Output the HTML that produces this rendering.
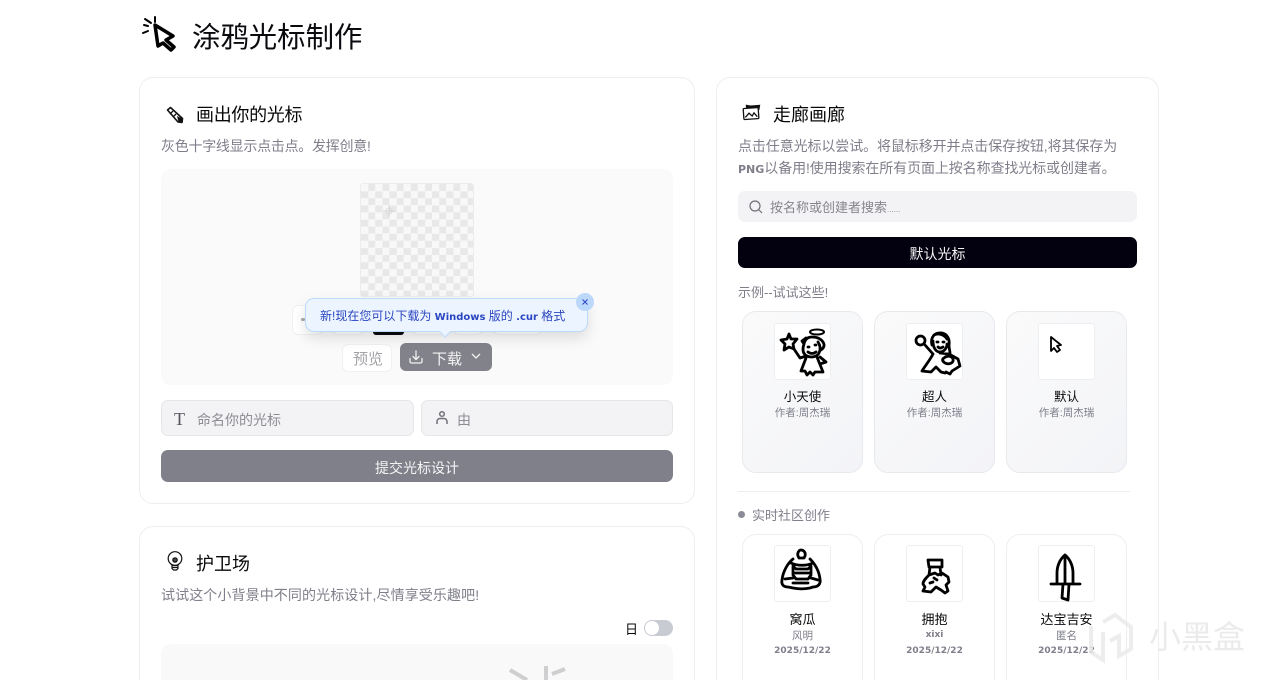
<!DOCTYPE html>
<html lang="zh"><head><meta charset="utf-8"><title>涂鸦光标制作</title>
<style>
*{box-sizing:border-box}
html,body{margin:0;padding:0;background:#fff;width:1280px;height:680px;overflow:hidden}
#p{position:relative;width:1280px;height:680px;overflow:hidden;font-family:"Liberation Sans","Noto Sans CJK SC",sans-serif;color:#09090b}
.a{position:absolute}
.t{position:absolute;white-space:nowrap;line-height:1}
.card{position:absolute;background:#fff;border:1px solid #eeeef0;border-radius:14px}
.card.open{border-bottom:0;border-radius:14px 14px 0 0}
.g{color:#7f7f8b}
.v{font-family:"DejaVu Sans",sans-serif;font-weight:bold}
.tile{position:absolute;width:121px;border-radius:14px}
.thumb{position:absolute;left:31px;top:11px;width:57px;height:57px;background:#fff;border:1px solid #eeeef0;border-radius:3px}
.live .thumb{top:10px}
.thumb svg{position:absolute;left:-1px;top:-1px;overflow:hidden}
.thumb path,.thumb circle,.thumb ellipse{fill:none;stroke:#000;stroke-width:2.800;stroke-linecap:round;stroke-linejoin:round}
.c{position:absolute;left:-1px;width:121px;text-align:center;white-space:nowrap;line-height:1}
.ex{background:linear-gradient(135deg,#fafafb,#f3f4f7);border:1px solid #e8e9ed}
.live{background:#fff;border:1px solid #eeeef0}
.tile.live.open{border-bottom:0;border-radius:14px 14px 0 0}
.mini{position:absolute;height:30px;background:#fff;border:1px solid #f0f0f2;border-radius:6px}
</style></head><body><div id="p">

<svg class="a" style="left:141px;top:14px" width="38" height="40" viewBox="0 0 38 40"><g fill="none" stroke="#000" stroke-linecap="round" stroke-linejoin="round"><path d="M14 3v5M4 5l6 4M2 19l5-2M3 11l4 1" stroke-width="2"/><path d="M14 11l18 11-7 4 8 7-3 3-8-7-5 3z" stroke-width="3.500" fill="#fff"/></g></svg>
<div class="t" style="left:192px;top:24px;font-size:28.400px;color:#0b0b0f">涂鸦光标制作</div>

<!-- left card -->
<div class="card" style="left:139px;top:77px;width:556px;height:427px"></div>
<svg class="a" style="left:165px;top:105px" width="20" height="20" viewBox="0 0 20 20"><path d="M2.500 5L5.500 2.500 17.500 13.500 17 17.500 13 17z" fill="#fff" stroke="#111" stroke-width="1.600" stroke-linejoin="round"/><path d="M8 6l-3 3M11 9l-3 3" stroke="#111" stroke-width="1.300"/><path d="M12 11l5 2.500.5 4-4-.5z" fill="#111"/></svg>
<div class="t" style="left:196px;top:106px;font-size:18px;letter-spacing:-.3px">画出你的光标</div>
<div class="t g" style="left:161px;top:139px;font-size:14px;letter-spacing:-.27px">灰色十字线显示点击点。发挥创意!</div>
<div class="a" style="left:161px;top:169px;width:512px;height:216px;background:#fafafa;border-radius:10px"></div>
<div class="a" style="left:360px;top:183px;width:114px;height:114px;border-radius:3px;border:1px solid #ececec;background-color:#fff;background-image:conic-gradient(#e8e8e8 25%,#f8f8f8 0 50%,#e8e8e8 0 75%,#f8f8f8 0);background-size:14.200px 14.200px"></div>
<svg class="a" style="left:383px;top:205px" width="12" height="12" viewBox="0 0 12 12"><path d="M6 0v12M0 6h12" stroke="#d4d4d4" stroke-width="1"/><circle cx="6" cy="6" r="3" fill="none" stroke="#dcdcdc"/></svg>

<div class="mini" style="left:292px;top:305px;width:31px"></div>
<div class="a" style="left:301px;top:318px;width:4px;height:3px;background:#aaa;border-radius:2px"></div>
<div class="mini" style="left:332px;top:305px;width:32px"></div>
<div class="a" style="left:373px;top:318px;width:31px;height:17px;background:#09090f;border-radius:3px"></div>
<div class="mini" style="left:412px;top:305px;width:32px"></div>
<div class="mini" style="left:453px;top:305px;width:30px"></div>
<div class="mini" style="left:493px;top:305px;width:49px"></div>

<div class="a" style="left:342px;top:344px;width:50px;height:28px;background:#fff;border:1px solid #f1f1f3;border-radius:6px"></div>
<div class="t" style="left:353px;top:352px;font-size:15px;color:#a3a3a8">预览</div>
<div class="a" style="left:400px;top:343px;width:92px;height:28px;background:#82828a;border-radius:6px"></div>
<svg class="a" style="left:409px;top:350px" width="14" height="14" viewBox="0 0 14 14" fill="none" stroke="#f2f2f2" stroke-width="1.300" stroke-linecap="round" stroke-linejoin="round"><path d="M1 8.500v3a1.500 1.500 0 0 0 1.500 1.500h9a1.500 1.500 0 0 0 1.500-1.500v-3M7 1v8M4 6.500L7 9.500l3-3"/></svg>
<div class="t" style="left:432px;top:352px;font-size:15px;color:#f4f4f5">下载</div>
<svg class="a" style="left:471px;top:353px" width="10" height="7" viewBox="0 0 10 7" fill="none" stroke="#f2f2f2" stroke-width="1.300"><path d="M1 1l4 4 4-4"/></svg>

<!-- popup -->
<div class="a" style="left:305px;top:298px;width:283px;height:34px;background:#ecf4ff;border:1px solid #bddafc;border-radius:9px;box-shadow:0 6px 14px rgba(0,0,0,.12)"></div>
<div class="a" style="left:441px;top:328px;width:8px;height:8px;background:#ecf4ff;border-right:1px solid #bddafc;border-bottom:1px solid #bddafc;transform:rotate(45deg)"></div>
<div class="t" style="left:320px;top:310px;font-size:12px;color:#2a46c0">新!现在您可以下载为 <span class="v" style="font-size:10px">Windows</span> 版的 <span class="v" style="font-size:10px">.cur</span> 格式</div>
<div class="a" style="left:576px;top:293px;width:18px;height:18px;border-radius:50%;background:#bcd8fb"></div>
<svg class="a" style="left:582px;top:299px" width="6" height="6" viewBox="0 0 6 6"><path d="M.5.500l5 5M5.500.500l-5 5" stroke="#2a46c0" stroke-width="1"/></svg>

<!-- inputs -->
<div class="a" style="left:161px;top:400px;width:253px;height:36px;background:#f3f3f5;border:1px solid #e6e6e9;border-radius:7px"></div>
<div class="t" style="left:174px;top:410px;font-size:18px;font-family:'Liberation Serif',serif;color:#55555e">T</div>
<div class="t" style="left:197px;top:413px;font-size:14px;color:#8c8c94">命名你的光标</div>
<div class="a" style="left:421px;top:400px;width:252px;height:36px;background:#f3f3f5;border:1px solid #e6e6e9;border-radius:7px"></div>
<svg class="a" style="left:435px;top:410px" width="14" height="16" viewBox="0 0 14 16" fill="none" stroke="#6f6f78" stroke-width="1.500"><circle cx="7" cy="4" r="2.300"/><path d="M2 14v-2.500a3 3 0 0 1 3-3h4a3 3 0 0 1 3 3V14"/></svg>
<div class="t" style="left:457px;top:413px;font-size:14px;color:#8c8c94">由</div>
<div class="a" style="left:161px;top:450px;width:512px;height:32px;background:#80808a;border-radius:7px"></div>
<div class="t" style="left:161px;width:512px;top:461px;font-size:14px;color:#f4f4f5;text-align:center">提交光标设计</div>

<!-- playground -->
<div class="card open" style="left:139px;top:526px;width:556px;height:154px"></div>
<svg class="a" style="left:166px;top:551px" width="18" height="20" viewBox="0 0 18 20" fill="none" stroke="#111" stroke-width="1.200"><circle cx="9" cy="7.500" r="6.800"/><path d="M6 14.500h6v3l-1.500 1.500h-3L6 17.500zM6 16.500h6"/><circle cx="9" cy="9" r="2.200" fill="#444"/></svg>
<div class="t" style="left:196px;top:555px;font-size:18px">护卫场</div>
<div class="t g" style="left:161px;top:588px;font-size:14px;letter-spacing:.1px">试试这个小背景中不同的光标设计,尽情享受乐趣吧!</div>
<div class="t" style="left:625px;top:623px;font-size:13px">日</div>
<div class="a" style="left:644px;top:620px;width:29px;height:16px;background:#c9cbd3;border-radius:8px"></div>
<div class="a" style="left:645px;top:621px;width:14px;height:14px;background:#fff;border-radius:50%"></div>
<div class="a" style="left:161px;top:644px;width:512px;height:36px;background:#f9f9f9;border-radius:10px 10px 0 0"></div>
<svg class="a" style="left:505px;top:660px" width="70" height="20" viewBox="0 0 70 20" fill="none" stroke="#cfcfd1" stroke-width="4"><path d="M5 10l17 10M41 6v14M60 9l-13 5"/></svg>

<!-- right card -->
<div class="card open" style="left:716px;top:77px;width:443px;height:603px"></div>
<svg class="a" style="left:742px;top:104px" width="20" height="18" viewBox="0 0 20 18" fill="none" stroke="#111" stroke-width="1.300"><g transform="rotate(-4 10 9)"><path d="M5 1l4 1h9l-1 4H5z" fill="#111"/><rect x="1.500" y="4" width="15" height="11" rx="1" fill="#fff"/><path d="M3 13l4-4 3 3 2-3 3 4"/></g></svg>
<div class="t" style="left:773px;top:106px;font-size:18px">走廊画廊</div>
<div class="t g" style="left:738px;top:139px;font-size:14px;letter-spacing:-.1px">点击任意光标以尝试。将鼠标移开并点击保存按钮,将其保存为</div>
<div class="t g" style="left:738px;top:161px;font-size:14px;letter-spacing:-.1px"><span class="v" style="font-size:11px;letter-spacing:0">PNG</span>以备用!使用搜索在所有页面上按名称查找光标或创建者。</div>
<div class="a" style="left:738px;top:191px;width:399px;height:31px;background:#f3f3f5;border-radius:7px"></div>
<svg class="a" style="left:749px;top:200px" width="14" height="14" viewBox="0 0 14 14" fill="none" stroke="#6f6f78" stroke-width="1.200"><circle cx="6" cy="6" r="5"/><path d="M10 10l3 3"/></svg>
<div class="t" style="left:770px;top:201px;font-size:13px;color:#85858d">按名称或创建者搜索<span style="font-size:8px">......</span></div>
<div class="a" style="left:738px;top:237px;width:399px;height:31px;background:#03010f;border-radius:7px"></div>
<div class="t" style="left:738px;width:399px;top:247px;font-size:14px;color:#f4f4f5;text-align:center">默认光标</div>
<div class="t g" style="left:738px;top:286px;font-size:13px">示例--试试这些!</div>

<div class="tile ex" style="left:742px;top:311px;height:162px">
 <div class="thumb"><svg width="57" height="57" viewBox="0 0 57 57"><path d="M15 11l2 5 6 0-4 5 1 5-5-2-5 3 1-6-4-4 6-1zM20 26l6 9 6-2M30 21c-2 6-1 10 3 12 4 2 10 1 12-3 2-4 1-8-1-11M30 21c1-5 4-7 8-7 5 0 9 2 11 5 2 3 1 6-2 8M30 21l-2-3 4-3M34 24h1M41 22h1M34 29q4 3 8 0M32 35l-5 13h4l2 4 3-3 3 3 2-3h8l-6-15M46 34l6 5-6 2"/><ellipse cx="43" cy="9" rx="7" ry="2.500" style="stroke-width:2"/></svg></div>
 <div class="c" style="top:79px;font-size:12.500px">小天使</div><div class="c g" style="top:96px;font-size:10.500px">作者:周杰瑞</div>
</div>
<div class="tile ex" style="left:874px;top:311px;height:162px">
 <div class="thumb"><svg width="57" height="57" viewBox="0 0 57 57"><circle cx="14.500" cy="17.500" r="4.500"/><path d="M19 22l8 9M26 22c-2-8 3-13 10-12 5 1 8 6 7 12 0 4 1 6 1 8M28 12c4-2 10-1 13 4M27 18c0 7 3 11 7 11 4 0 7-4 7-8M31 19h1M37 19h1M32 24q2 2 5 0M27 31c-3 6-8 12-11 17l9 1 5-5 5 5 4 1M34 30l9 1 9 5 2 7-8 5-2 3-4-2M38 35c3-3 8-2 9 1 1 4-4 6-8 4-3-2-3-4-1-5"/></svg></div>
 <div class="c" style="top:79px;font-size:12.500px">超人</div><div class="c g" style="top:96px;font-size:10.500px">作者:周杰瑞</div>
</div>
<div class="tile ex" style="left:1006px;top:311px;height:162px">
 <div class="thumb"><svg width="57" height="57" viewBox="0 0 57 57"><path style="stroke-width:1.800" d="M13 14v14l3-3 3 4 3-2-3-4 4-1z"/></svg></div>
 <div class="c" style="top:79px;font-size:12.500px">默认</div><div class="c g" style="top:96px;font-size:10.500px">作者:周杰瑞</div>
</div>

<div class="a" style="left:738px;top:491px;width:392px;height:1px;background:#eeeef0"></div>
<div class="a" style="left:738px;top:511px;width:7px;height:7px;border-radius:50%;background:#8b8c97"></div>
<div class="t g" style="left:752px;top:509px;font-size:13px">实时社区创作</div>

<div class="tile live open" style="left:742px;top:534px;height:146px">
 <div class="thumb"><svg width="57" height="57" viewBox="0 0 57 57"><path d="M24 11c-1-3 1-6 3-6 3 0 5 3 4 6l-1 2h-5zM19 14c-5 4-10 12-11 21-1 5 2 7 6 7l5 1c5 1 12 1 17 0l3-1c5 0 8-3 7-8-1-8-5-15-10-20M17 18c6 3 16 3 22 0M19 21l3 3h12l3-3v9l-3 4H22l-3-4zM21 28h14M11 34l8-1M37 33l7 2M19 38h15"/></svg></div>
 <div class="c" style="top:78px;font-size:13px">窝瓜</div><div class="c g" style="top:96px;font-size:10.500px">风明</div><div class="c g v" style="top:112px;font-size:9px">2025/12/22</div>
</div>
<div class="tile live open" style="left:874px;top:534px;height:146px">
 <div class="thumb"><svg width="57" height="57" viewBox="0 0 57 57"><path d="M22 15h14l0 7-13 0zM24 22l-1 8M34 22l1 8M23 30c-3 3-6 6-6 9l2 3-2 4 8 1 5-5 5 3 4 3 3-2-2-6 3-3-1-5-6-4-4 2-3-2zM28 33l3 2M24 38l3-1"/></svg></div>
 <div class="c" style="top:78px;font-size:13px">拥抱</div><div class="c g v" style="top:96px;font-size:9px">xixi</div><div class="c g v" style="top:112px;font-size:9px">2025/12/22</div>
</div>
<div class="tile live open" style="left:1006px;top:534px;height:146px">
 <div class="thumb"><svg width="57" height="57" viewBox="0 0 57 57"><path d="M27 10c-5 4-8 11-8 18v10M27 10c5 4 8 11 8 18v10M27 10v28M13 39h29M25 39l-1 14 6 2 1-16"/></svg></div>
 <div class="c" style="top:78px;font-size:13px">达宝吉安</div><div class="c g" style="top:96px;font-size:10.500px">匿名</div><div class="c g v" style="top:112px;font-size:9px">2025/12/22</div>
</div>

<!-- watermark -->
<svg class="a" style="left:1088px;top:612px" width="46" height="56" viewBox="0 0 46 56" fill="none" stroke="#eaeaeb" stroke-opacity=".85" stroke-width="4"><path d="M3 14v26l12 8V20M15 10L27 3l16 12v22l-12 7V24l-9 5"/></svg>
<div class="t" style="left:1149px;top:621px;font-size:32px;color:#e8e8e9;opacity:.85">小黑盒</div>
</div></body></html>
